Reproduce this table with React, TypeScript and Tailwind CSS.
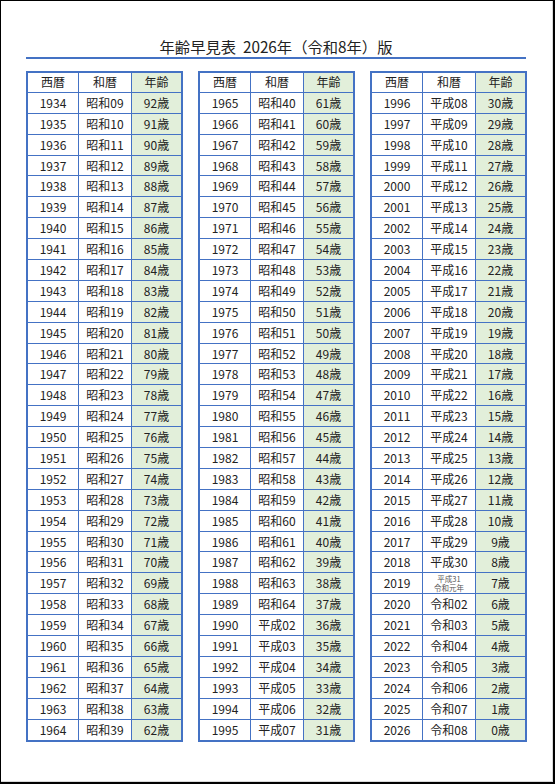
import React from 'react';

const BASE = 2026;

const pad = (n: number) => String(n).padStart(2, '0');

// 和暦表記（2019年は別扱い）
const toWareki = (y: number) => {
  if (y <= 1989) return `昭和${pad(y - 1925)}`;
  if (y <= 2018) return `平成${pad(y - 1988)}`;
  return `令和${pad(y - 2018)}`;
};

const range = (from: number, to: number) => {
  const list: number[] = [];
  for (let y = from; y <= to; y++) list.push(y);
  return list;
};

const columns = [range(1934, 1964), range(1965, 1995), range(1996, 2026)];

const AgeTable: React.FC<{ years: number[] }> = ({ years }) => (
  <div className="w-[157px] border-2 border-[#4472c4] flex flex-col">
    <div className="flex h-[19.9px] border-b border-[#4472c4]">
      <div className="w-[51px] border-r border-[#4472c4] flex items-center justify-center">西暦</div>
      <div className="w-[53px] border-r border-[#4472c4] flex items-center justify-center">和暦</div>
      <div className="flex-1 bg-[#e2efda] flex items-center justify-center">年齢</div>
    </div>
    {years.map((y, i) => (
      <div
        key={y}
        className={`flex ${i === years.length - 1 ? 'h-[19.9px]' : 'h-[20.9px] border-b border-[#4472c4]'}`}
      >
        <div className="w-[51px] border-r border-[#4472c4] flex items-center justify-center">{y}</div>
        <div className="w-[53px] border-r border-[#4472c4] flex items-center justify-center">
          {y === 2019 ? (
            <div className="flex flex-col items-center text-[7.5px] leading-[9.5px] text-[#555]">
              <span>平成31</span>
              <span>令和元年</span>
            </div>
          ) : (
            toWareki(y)
          )}
        </div>
        <div className="flex-1 bg-[#e2efda] flex items-center justify-center">{BASE - y}歳</div>
      </div>
    ))}
  </div>
);

export default function App() {
  return (
    <div
      className="w-[555px] h-[784px] bg-white border-l border-t border-black border-r-2 border-b-2 text-[#222] text-[12px]"
      style={{ fontFamily: '"Noto Sans CJK JP", "Noto Sans", sans-serif' }}
    >
      <div className="h-full border-r border-b border-[#d8d8d8]">
        <div className="pt-[35px] mx-[25px] w-[500px] border-b-2 border-[#4472c4] text-center text-[15.3px] leading-[20px] pb-[1px] text-[#222]">
          年齢早見表&nbsp;&nbsp;2026年（令和8年）版
        </div>
        <div className="flex gap-[15px] ml-[25px] mt-[12px]">
          {columns.map((years) => (
            <AgeTable key={years[0]} years={years} />
          ))}
        </div>
      </div>
    </div>
  );
}
